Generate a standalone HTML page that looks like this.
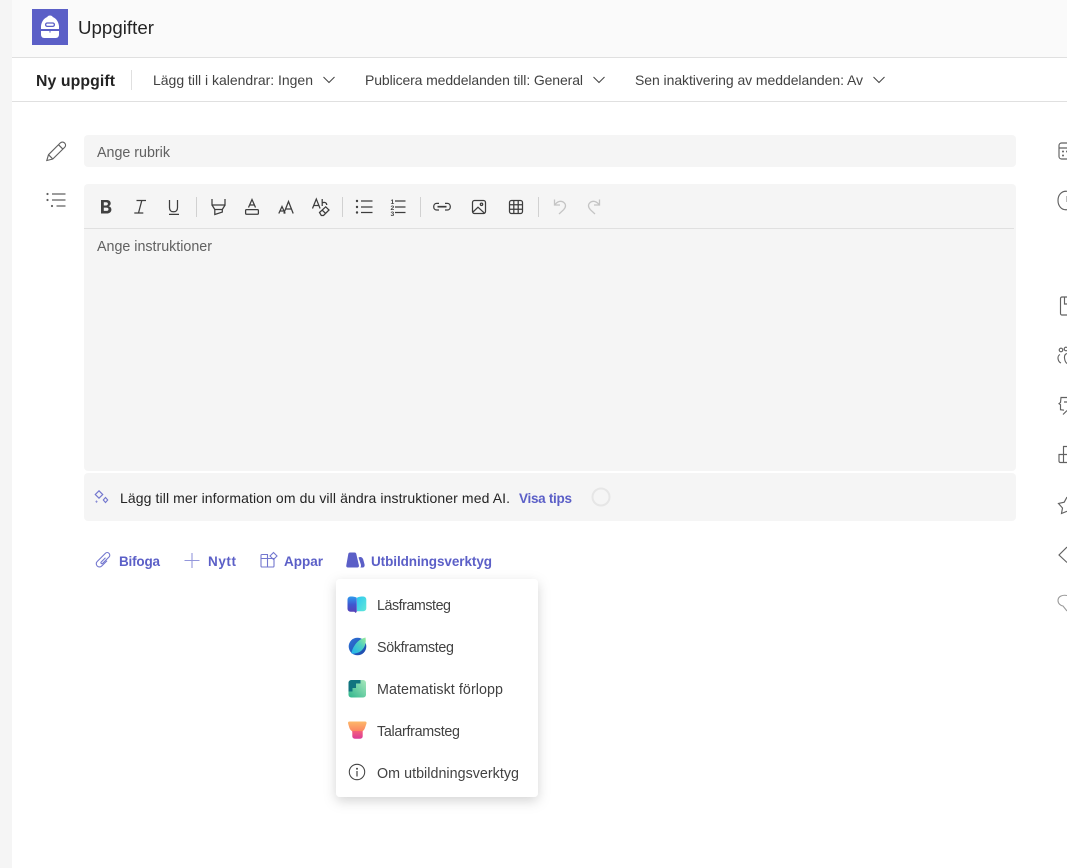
<!DOCTYPE html>
<html lang="sv"><head><meta charset="utf-8"><title>Uppgifter</title>
<style>
html,body{margin:0;padding:0;background:#fff;width:1067px;height:868px;overflow:hidden}
svg{display:block;position:absolute;left:0;top:0}
text{font-family:"Liberation Sans",sans-serif;font-size:14px;fill:#424242}
.b{font-weight:bold}
.p{fill:#5b5fc7;font-weight:bold;font-size:13.5px}
.m{font-size:14.3px}
.s{fill:none;stroke:#424242;stroke-width:1}
.t{fill:none;stroke:#3d3d3d;stroke-width:1.25}
.d{fill:none;stroke:#c4c4c4;stroke-width:1.3}
.i{fill:none;stroke:#5b5fc7;stroke-width:1.1;opacity:.85}
.r{fill:none;stroke:#616161;stroke-width:1.15}
</style></head><body>
<svg width="1067" height="868" viewBox="0 0 1067 868" xmlns="http://www.w3.org/2000/svg">
<defs>
<filter id="sh" x="-20%" y="-20%" width="140%" height="140%"><feDropShadow dx="0" dy="4" stdDeviation="6" flood-color="#000" flood-opacity=".17"/></filter>
<linearGradient id="g1" x1="0" y1="0" x2="0" y2="1"><stop offset="0" stop-color="#2f9bee"/><stop offset=".5" stop-color="#3f57cf"/><stop offset="1" stop-color="#5a3fb5"/></linearGradient>
<linearGradient id="g2" x1="0" y1="0" x2="1" y2="1"><stop offset="0" stop-color="#2ec8f0"/><stop offset="1" stop-color="#62e8d8"/></linearGradient>
<linearGradient id="g3" x1="0" y1="0" x2="1" y2="1"><stop offset="0" stop-color="#2f73d8"/><stop offset="1" stop-color="#1c48a8"/></linearGradient>
<linearGradient id="g4" x1="0" y1="1" x2="1" y2="0"><stop offset="0" stop-color="#1fb0f0"/><stop offset=".6" stop-color="#4fd0c0"/><stop offset="1" stop-color="#9cec98"/></linearGradient>
<linearGradient id="g5" x1="0" y1="0" x2="0" y2="1"><stop offset="0" stop-color="#fdb96a"/><stop offset="1" stop-color="#fb8060"/></linearGradient>
<linearGradient id="g6" x1="0" y1="0" x2="0" y2="1"><stop offset="0" stop-color="#f5607a"/><stop offset="1" stop-color="#d93c98"/></linearGradient>
<linearGradient id="g7" x1="0" y1="1" x2="1" y2="0"><stop offset="0" stop-color="#2fb58c"/><stop offset="1" stop-color="#a8e8bc"/></linearGradient>
</defs>

<!-- backgrounds -->
<rect x="0" y="0" width="12" height="868" fill="#f5f5f5"/>
<rect x="12" y="0" width="1055" height="57" fill="#fafafa"/>
<rect x="12" y="57" width="1055" height="1" fill="#e0e0e0"/>
<rect x="12" y="101" width="1055" height="1" fill="#e0e0e0"/>

<!-- app icon -->
<rect x="32" y="9" width="36" height="36" fill="#5b5fc7"/>
<path d="M50 15.500c-1.300 0-2.300.6-2.800 1.500-3.300 1.300-5.700 4.800-6.200 9v3h18v-3c-.5-4.200-2.900-7.700-6.200-9-.5-.9-1.500-1.500-2.800-1.500z" fill="#fff"/>
<rect x="45.600" y="23" width="8.800" height="3.400" rx="1.700" fill="#fff" stroke="#5b5fc7" stroke-width="1.300"/>
<path d="M41 31h8.500v1.600h1V31H59v3.500c0 2.100-1.300 3.500-3.200 3.500H44.200c-1.900 0-3.200-1.400-3.200-3.500z" fill="#fff"/>
<text x="78" y="34" style="font-size:18.700px;fill:#242424" textLength="76">Uppgifter</text>

<!-- command row -->
<text x="36" y="86" class="b" style="font-size:15.800px;fill:#242424" textLength="79">Ny uppgift</text>
<rect x="131" y="70" width="1" height="20" fill="#e0e0e0"/>
<text x="153" y="85" textLength="160">Lägg till i kalendrar: Ingen</text>
<path class="s" d="M323.500 77l5.500 5.500 5.500-5.500"/>
<text x="365" y="85" textLength="218">Publicera meddelanden till: General</text>
<path class="s" d="M593.500 77l5.500 5.500 5.500-5.500"/>
<text x="635" y="85" textLength="228">Sen inaktivering av meddelanden: Av</text>
<path class="s" d="M873.500 77l5.500 5.500 5.500-5.500"/>

<!-- left icons -->
<path class="r" d="M46.800 160.500l1.700-5.800 11.700-11.700c1.300-1.300 3.200-1.300 4.400 0s1.300 3.100 0 4.400L52.800 159z M58.600 144.800l4.500 4.500 M48.500 154.700l4.300 4.300"/>
<g fill="#616161"><circle cx="47.500" cy="194" r="1.100"/><circle cx="47.500" cy="200" r="1.100"/><circle cx="52" cy="206" r="1.100"/></g>
<path class="r" d="M52 194h13.500M52 200h13.500M56.500 206h9"/>

<!-- title input -->
<rect x="84" y="135" width="932" height="32" rx="4" fill="#f5f5f5"/>
<text x="97" y="157" style="fill:#616161;font-size:14.300px" textLength="73">Ange rubrik</text>

<!-- editor -->
<rect x="84" y="184" width="932" height="287" rx="4" fill="#f5f5f5"/>
<rect x="84" y="228" width="930" height="1" fill="#e0e0e0"/>
<text x="97" y="251" style="fill:#616161;font-size:14.300px" textLength="115">Ange instruktioner</text>

<!-- toolbar -->
<path d="M101 200h5.600c2.500 0 4.100 1.300 4.100 3.300 0 1.400-.8 2.500-2.100 3 1.700.4 2.800 1.600 2.800 3.300 0 2.400-1.900 3.900-4.700 3.900H101z M103.800 202.300v3.200h2.200c1.200 0 1.900-.6 1.900-1.600 0-1-.7-1.600-1.900-1.600z M103.800 207.600v3.300h2.600c1.300 0 2.100-.6 2.100-1.700s-.8-1.600-2.100-1.600z" fill="#424242" fill-rule="evenodd"/>
<path class="t" d="M136.500 200.500h9.500M141.800 200.500l-3.300 12.500M134.300 213h9"/>
<path class="t" d="M169.500 200v7.500c0 2.900 1.600 4.300 4 4.300s4-1.400 4-4.300V200M169 214.400h10"/>
<rect x="196" y="197" width="1" height="20" fill="#d1d1d1"/>
<path class="t" d="M212 199v6h13v-6M212 205l2.800 4.500h7.500l2.800-4.500M214.800 209.500v5l7.500-2.400v-2.600"/>
<path class="t" d="M248.500 207.500l3.500-8 3.500 8M249.700 205h4.600"/>
<rect x="245.600" y="209.600" width="12.800" height="4.600" rx="1" class="t"/>
<path class="t" d="M278.800 213.500l3.200-7 3.200 7M280 211h4.300M283.800 213.500l4.700-12 4.700 12M285.500 209h6"/>
<path class="t" d="M312.500 208.500l3.800-9.500 3.800 9.500M313.800 205.500h5M322.200 199v7M322.200 203c2.500-1.300 4.600-.3 4.500 2"/>
<path class="t" d="M319.500 212.500l6.200-5.700 3.300 3.200-5.500 5.500h-2.200z M322 210l3.400 3.200"/>
<rect x="342" y="197" width="1" height="20" fill="#d1d1d1"/>
<g fill="#424242"><circle cx="357" cy="201" r="1.200"/><circle cx="357" cy="207" r="1.200"/><circle cx="357" cy="212.500" r="1.200"/></g>
<path class="t" d="M361 201h11.500M361 207h11.500M361 212.500h11.500"/>
<text x="390.500" y="204" style="font-size:6.800px;font-weight:bold;fill:#424242">1</text>
<text x="390.500" y="210" style="font-size:6.800px;font-weight:bold;fill:#424242">2</text>
<text x="390.500" y="216" style="font-size:6.800px;font-weight:bold;fill:#424242">3</text>
<path class="t" d="M395 201h10.500M395 207h10.500M395 212.500h10.500"/>
<rect x="420" y="197" width="1" height="20" fill="#d1d1d1"/>
<path class="t" d="M439 203.400h-2.300c-1.700 0-3 1.400-3 3.300s1.300 3.300 3 3.300h2.300M445 203.400h2.300c1.700 0 3 1.400 3 3.300s-1.300 3.300-3 3.300H445"/>
<path d="M437.500 206.700h9" fill="none" stroke="#3d3d3d" stroke-width="1.700"/>
<rect x="472.500" y="200.500" width="13" height="13" rx="2" class="t"/>
<path class="t" d="M473 212l5-4.800 6.500 6"/><circle cx="481.500" cy="204.300" r="1.200" class="t"/>
<rect x="509.500" y="200.500" width="13" height="13" rx="2" class="t"/>
<path class="t" d="M509.500 204.800h13M509.500 209.200h13M513.800 200.500v13M518.200 200.500v13"/>
<rect x="538" y="197" width="1" height="20" fill="#d1d1d1"/>
<path class="d" d="M554.500 199.500v5.500h5.500M555 204.500c1.800-2.200 3.500-3.200 5.500-3.200 2.800 0 5 2.200 5 4.500 0 1.700-.8 2.800-2 4l-4.500 4.200"/>
<path class="d" d="M599.500 199.500v5.500h-5.500M599 204.500c-1.800-2.200-3.500-3.200-5.500-3.200-2.800 0-5 2.200-5 4.500 0 1.700.8 2.800 2 4l4.500 4.200"/>

<!-- AI bar -->
<path d="M84 477a4 4 0 0 1 4-4h924a4 4 0 0 1 4 4v40a4 4 0 0 1-4 4H88a4 4 0 0 1-4-4z" fill="#f5f5f5"/>
<path d="M99 490.800l3.700 3.700-3.700 3.700-3.700-3.700z" fill="none" stroke="#5b5fc7" stroke-width="1.200" opacity=".85"/>
<path d="M105.500 497.500l2.200 2.500-2.200 2.500-2.200-2.500z" fill="none" stroke="#5b5fc7" stroke-width="1.100" opacity=".85"/>
<path d="M96.500 500.200l1.200 1.400-1.200 1.400-1.200-1.400z" fill="#5b5fc7" opacity=".7"/>
<text x="120" y="503" style="fill:#242424" textLength="390">Lägg till mer information om du vill ändra instruktioner med AI.</text>
<text x="519" y="503" class="p" textLength="53">Visa tips</text>
<circle cx="601" cy="497" r="8.500" fill="none" stroke="#e6e6e6" stroke-width="2"/>

<!-- actions -->
<path class="i" transform="translate(103.500 560) rotate(45)" d="M3-2V5.500a3.200 3.200 0 0 1-6.400 0V-6a2.600 2.600 0 0 1 5.200 0V3a1 1 0 0 1-2 0V-3"/>
<text x="119" y="566" class="p" textLength="41">Bifoga</text>
<path d="M192 553v15M184.500 560.500h15" fill="none" stroke="#5b5fc7" stroke-width="1.100" opacity=".65"/>
<text x="208" y="566" class="p" textLength="28">Nytt</text>
<path class="i" d="M268 554.500h-6a1 1 0 0 0-1 1v10.500a1 1 0 0 0 1 1h11a1 1 0 0 0 1-1v-7.500h-13M267.500 554.500v12.500M270 556l3.500-3.500 3.500 3.500-3.500 3.500z"/>
<text x="284" y="566" class="p" textLength="39">Appar</text>
<path d="M350 552.500h4.500c1 0 1.600.6 1.800 1.500l2.600 11.200c.3 1.300-.3 2.300-1.600 2.300h-9.300c-1.400 0-2-1-1.700-2.300l2-11.200c.2-.9.800-1.500 1.700-1.500z" fill="#5b5fc7"/>
<path d="M358.500 557.500c2-1.200 3.900-.3 4.700 1.900l1.300 4.800c.5 1.700-.3 3.300-2 3.300h-2.100c.6-.8.700-1.700.5-2.900z" fill="#5b5fc7"/>
<text x="371" y="566" class="p" textLength="121">Utbildningsverktyg</text>

<!-- right cut-off icons -->
<path class="r" d="M1067 143h-5.500a2.500 2.500 0 0 0-2.500 2.500v11a2.500 2.500 0 0 0 2.500 2.500h5.500M1059 148h8"/>
<circle cx="1063" cy="151.500" r="1" fill="#616161"/><circle cx="1063" cy="155.500" r="1" fill="#616161"/><circle cx="1067" cy="151.500" r="1" fill="#616161"/>
<path class="r" d="M1067 191.300c-5.500-.6-9 3.800-9 9.200s3.500 9.800 9 9.200"/>
<path d="M1066.500 196v6" stroke="#bdbdbd" stroke-width="1" fill="none"/>
<path class="r" d="M1067 297h-5a1.500 1.500 0 0 0-1.500 1.500v15a1.500 1.500 0 0 0 1.500 1.500h5M1064.500 297v7h2.500"/>
<circle cx="1061" cy="350" r="1.800" class="r"/><circle cx="1066" cy="349" r="1.800" class="r"/>
<path class="r" d="M1060 354.500c-1.800.8-2.300 3-1.800 5 .4 1.500 1.300 3 2.800 3.500M1067 353.500c-2 .5-2.700 2.500-2.500 4.500s1 4.500 2.500 5.500"/>
<path class="r" d="M1067 397.500h-6l-.5 5-1.500 1.200 1.500 1v5l3.500.5M1067 402h-3M1063 414.500l4-4"/>
<path class="r" d="M1067 446.500h-3.500v8h-4.500v6.500c0 1 .5 1.500 1.500 1.500h6.500M1063.500 454.500h3.500M1063.500 454.500v8"/>
<path class="r" d="M1067 497l-2.800 5.200-5.700 1.300 4 4.500-1 5.500 5.500-2.200"/>
<path class="r" d="M1067 547l-8 8 8 7.500"/>
<path d="M1067 595.500c-4-.8-9 .5-9 5 0 3 2.500 5.200 5 5.500l4 5" fill="none" stroke="#9a9a9a" stroke-width="1.100"/>

<!-- menu -->
<rect x="336" y="579" width="202" height="218" rx="4" fill="#fff" filter="url(#sh)"/>

<path d="M347.500 599.500a3 3 0 0 1 3-3c2.500 0 4.800.3 6.300 1.200v13.800l-1 1.500-1.500-1.300h-3.800a3 3 0 0 1-3-3z" fill="url(#g1)"/>
<path d="M357 597.700c1.500-.9 3.800-1.200 6.300-1.200a3 3 0 0 1 3 3v8.700a3 3 0 0 1-3 3H357z" fill="url(#g2)"/>
<text x="377" y="610" class="m" textLength="74">Läsframsteg</text>

<circle cx="357.500" cy="646.500" r="8.800" fill="url(#g3)"/>
<path d="M365.500 637.500c1 5.500-.8 10.500-4.500 13.500-2.800 2.200-6.300 2.800-9.500 2.600 .2-2.800 1.300-5.500 3-8 2.500-4 6.500-7.200 11-8.100z" fill="url(#g4)"/>
<text x="377" y="652" class="m" textLength="77">Sökframsteg</text>

<rect x="348.500" y="680" width="17.500" height="17.500" rx="2.800" fill="url(#g7)"/>
<path d="M348.500 682.800a2.800 2.800 0 0 1 2.800-2.800h9.200v3.500h-4.500v4.500h-3.500v3.500h-4z" fill="#11747f"/>
<text x="377" y="694" class="m" textLength="126">Matematiskt förlopp</text>

<path d="M349.500 721.500h15.500c1.200 0 1.800.8 1.500 2l-1.200 3.500c-.5 2-1.600 3.500-3 4.300v1h-10v-1c-1.500-.8-2.700-2.300-3.200-4.300l-1-3.500c-.3-1.200.3-2 1.400-2z" fill="url(#g5)"/>
<path d="M352.300 731h10.400v5.200a2.500 2.500 0 0 1-2.500 2.500h-5.400a2.500 2.500 0 0 1-2.500-2.500z" fill="url(#g6)"/>
<text x="377" y="736" class="m" textLength="83">Talarframsteg</text>

<circle cx="357" cy="772" r="7.700" fill="none" stroke="#424242" stroke-width="1.050"/>
<circle cx="357" cy="768.800" r="1" fill="#424242"/><path d="M357 771v5.500" stroke="#424242" stroke-width="1.200" fill="none"/>
<text x="377" y="778" class="m" textLength="142">Om utbildningsverktyg</text>
</svg>
</body></html>
